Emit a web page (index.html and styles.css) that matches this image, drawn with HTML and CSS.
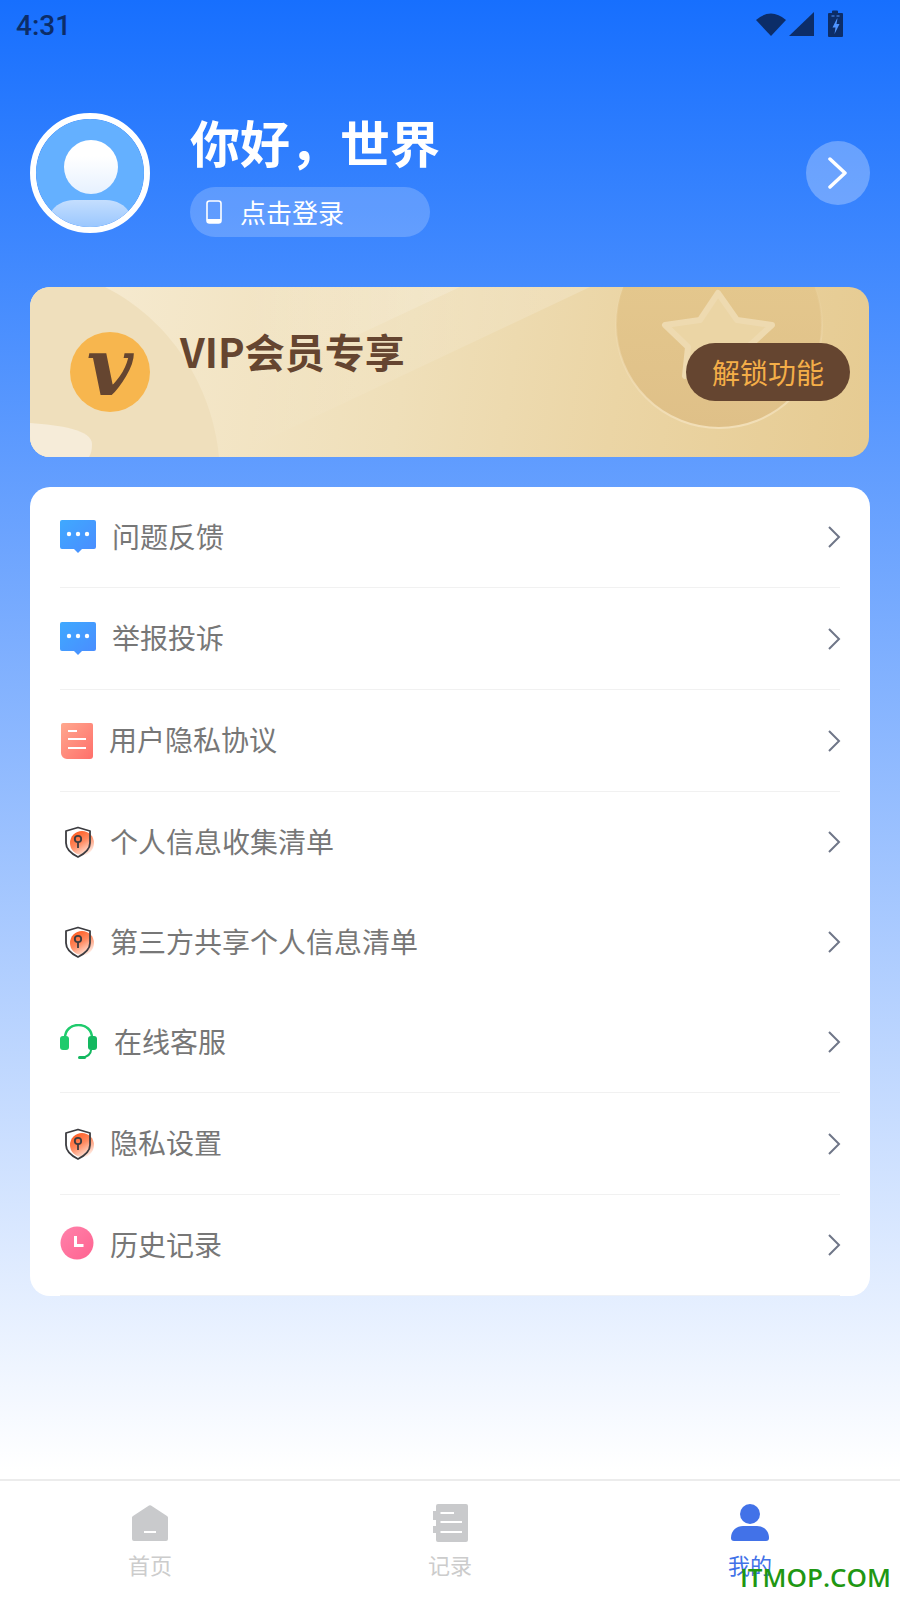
FILE: index.html
```html
<!DOCTYPE html>
<html lang="zh">
<head>
<meta charset="utf-8">
<title>我的</title>
<link rel="stylesheet" href="styles.css">
</head>
<body>
<div class="page">
  <main class="main">
    <div class="status">
      <span class="time">4:31</span>
      <svg class="status-icons" width="90" height="28" viewBox="0 0 90 28">
        <path d="M0 10Q15-3 30 10L15 26Z" fill="#0c2d68"/>
        <path d="M33 26L58 2V26Z" fill="#0c2d68"/>
        <path d="M76 1.5a1 1 0 0 1 1-1h4a1 1 0 0 1 1 1V3h4a1 1 0 0 1 1 1v22a1 1 0 0 1-1 1H73a1 1 0 0 1-1-1V4a1 1 0 0 1 1-1h3Z" fill="#0c2d68"/>
        <path d="M81 8.500l-4.500 9h3l-1 6.500 5-10h-3l1-5.500Z" fill="#4f94ff"/>
        <path d="M75.500 6h3M80.500 6h3" stroke="#4f94ff" stroke-width="1"/>
      </svg>
    </div>

    <header class="profile">
      <div class="avatar">
        <svg width="108" height="108" viewBox="0 0 108 108">
          <defs>
            <linearGradient id="headG" x1="0" y1="0" x2="0" y2="1"><stop offset="0.3" stop-color="#fff"/><stop offset="1" stop-color="#e6f1ff"/></linearGradient>
            <linearGradient id="bodyG" x1="0" y1="0" x2="0" y2="1"><stop offset="0" stop-color="#c4defe"/><stop offset="1" stop-color="#93c3fe"/></linearGradient>
          </defs>
          <circle cx="54" cy="54" r="54" fill="#64b0ff"/>
          <circle cx="55" cy="48" r="27" fill="url(#headG)"/>
          <path d="M14 95C18 86 28 81 38 81H70C80 81 90 86 94 95A54 54 0 0 1 14 95Z" fill="url(#bodyG)"/>
        </svg>
      </div>
      <div class="who">
        <h1 class="hello">你好，世界</h1>
        <div class="login">
          <svg class="login-icon" width="16" height="24" viewBox="0 0 16 24">
            <rect x="1" y="1" width="14" height="22" rx="2.500" fill="none" stroke="#fff" stroke-width="1.600"/>
            <path d="M1 19H15V20.500A2.500 2.500 0 0 1 12.500 23H3.500A2.500 2.500 0 0 1 1 20.500Z" fill="#fff"/>
          </svg>
          <span>点击登录</span>
        </div>
      </div>
      <div class="next">
        <svg width="20" height="32" viewBox="0 0 20 32"><path d="M2 2L17 16L2 30" fill="none" stroke="#fff" stroke-width="3.500" stroke-linecap="round" stroke-linejoin="round"/></svg>
      </div>
    </header>

    <section class="vip">
      <svg class="vip-bg" width="840" height="170" viewBox="30 287 840 170">
        <defs>
          <linearGradient id="vipG" gradientUnits="userSpaceOnUse" x1="30" y1="287" x2="870" y2="420">
            <stop offset="0" stop-color="#f7ecd4"/><stop offset="0.45" stop-color="#efdfb9"/><stop offset="0.7" stop-color="#ebd5a5"/><stop offset="1" stop-color="#e6cb92"/>
          </linearGradient>
          <linearGradient id="coinG" x1="0" y1="0" x2="0" y2="1"><stop offset="0" stop-color="#e6ca8f"/><stop offset="1" stop-color="#dfc088"/></linearGradient>
          <linearGradient id="coinS" x1="0" y1="0" x2="0" y2="1"><stop offset="0.3" stop-color="#f2dfb8" stop-opacity="0"/><stop offset="1" stop-color="#f2dfb8"/></linearGradient>
          <linearGradient id="bandB" gradientUnits="userSpaceOnUse" x1="240" y1="0" x2="590" y2="0"><stop offset="0" stop-color="#fff" stop-opacity="0"/><stop offset="1" stop-color="#fff" stop-opacity=".18"/></linearGradient>
          <linearGradient id="bandA" gradientUnits="userSpaceOnUse" x1="240" y1="0" x2="460" y2="0"><stop offset="0" stop-color="#fff" stop-opacity="0"/><stop offset="1" stop-color="#fff" stop-opacity=".18"/></linearGradient>
        </defs>
        <rect x="30" y="287" width="840" height="170" fill="url(#vipG)"/>
        <path d="M590 287L240 452V287Z" fill="url(#bandB)"/>
        <path d="M460 287L240 390V287Z" fill="url(#bandA)"/>
        <path d="M30 287H105C170 320 212 385 219 457H30Z" fill="#efdfbc"/>
        <path d="M30 423C60 425 92 430 92 444C92 450 91 454 89 457H30Z" fill="#f6ecd9"/>
        <circle cx="719" cy="325" r="103" fill="url(#coinG)" stroke="url(#coinS)" stroke-width="2"/>
        <path d="M718 293L737 320L772 325L748 347L752 376L718 360L685 376L688 347L665 325L700 320Z" fill="#ebd5a5" stroke="#eedab0" stroke-width="6" stroke-linejoin="round"/>
      </svg>
      <div class="vip-logo"><span class="vip-v">v</span></div>
      <h2 class="vip-title">VIP会员专享</h2>
      <div class="unlock">解锁功能</div>
    </section>

    <section class="menu">
      <div class="row row-first">
        <svg class="ico ico-msg" width="36" height="34" viewBox="0 0 36 34"><use href="#msg"/></svg>
        <span class="label">问题反馈</span>
        <svg class="chev" width="14" height="24" viewBox="0 0 14 24"><path d="M2 2L12 12L2 22" fill="none" stroke="#6f7688" stroke-width="2"/></svg>
      </div>
      <div class="row row-b">
        <svg class="ico ico-msg" width="36" height="34" viewBox="0 0 36 34"><use href="#msg"/></svg>
        <span class="label">举报投诉</span>
        <svg class="chev" width="14" height="24" viewBox="0 0 14 24"><path d="M2 2L12 12L2 22" fill="none" stroke="#6f7688" stroke-width="2"/></svg>
      </div>
      <div class="row row-b">
        <svg class="ico ico-doc" width="32" height="36" viewBox="0 0 32 36">
          <defs><linearGradient id="docG" x1="0" y1="0" x2="1" y2="1"><stop offset="0" stop-color="#ffa88e"/><stop offset="1" stop-color="#ff6f6b"/></linearGradient></defs>
          <path d="M2 0H30a2 2 0 0 1 2 2V33a3 3 0 0 1-3 3H6a6 6 0 0 1-6-6V2a2 2 0 0 1 2-2Z" fill="url(#docG)"/>
          <path d="M7 8H16M7 16H25M7 25H25" stroke="#fff" stroke-width="2"/>
        </svg>
        <span class="label">用户隐私协议</span>
        <svg class="chev" width="14" height="24" viewBox="0 0 14 24"><path d="M2 2L12 12L2 22" fill="none" stroke="#6f7688" stroke-width="2"/></svg>
      </div>
      <div class="row row-c">
        <svg class="ico ico-shield" width="30" height="32" viewBox="0 0 30 32"><use href="#shield"/></svg>
        <span class="label">个人信息收集清单</span>
        <svg class="chev" width="14" height="24" viewBox="0 0 14 24"><path d="M2 2L12 12L2 22" fill="none" stroke="#6f7688" stroke-width="2"/></svg>
      </div>
      <div class="row row-c">
        <svg class="ico ico-shield" width="30" height="32" viewBox="0 0 30 32"><use href="#shield"/></svg>
        <span class="label">第三方共享个人信息清单</span>
        <svg class="chev" width="14" height="24" viewBox="0 0 14 24"><path d="M2 2L12 12L2 22" fill="none" stroke="#6f7688" stroke-width="2"/></svg>
      </div>
      <div class="row row-first">
        <svg class="ico ico-head" width="38" height="36" viewBox="0 0 38 36">
          <path d="M5 14C5 6 11 1 18.500 1S32 6 32 14" fill="none" stroke="#1ecb6c" stroke-width="2.400"/>
          <path d="M31 26C31 31 27 33 21 34" fill="none" stroke="#14b860" stroke-width="2"/>
          <rect x="0" y="12" width="9" height="14" rx="3" fill="#1ecb6c"/>
          <rect x="28" y="12" width="9" height="14" rx="3" fill="#14b860"/>
          <rect x="18" y="32" width="8" height="3" rx="1.500" fill="#14b860"/>
        </svg>
        <span class="label">在线客服</span>
        <svg class="chev" width="14" height="24" viewBox="0 0 14 24"><path d="M2 2L12 12L2 22" fill="none" stroke="#6f7688" stroke-width="2"/></svg>
      </div>
      <div class="row row-b">
        <svg class="ico ico-shield" width="30" height="32" viewBox="0 0 30 32"><use href="#shield"/></svg>
        <span class="label">隐私设置</span>
        <svg class="chev" width="14" height="24" viewBox="0 0 14 24"><path d="M2 2L12 12L2 22" fill="none" stroke="#6f7688" stroke-width="2"/></svg>
      </div>
      <div class="row row-first row-last">
        <svg class="ico ico-clock" width="34" height="34" viewBox="0 0 34 34">
          <defs><linearGradient id="clockG" x1="0" y1="0" x2="1" y2="1"><stop offset="0" stop-color="#ff82ab"/><stop offset="1" stop-color="#ff6390"/></linearGradient></defs>
          <circle cx="17" cy="17" r="16.500" fill="url(#clockG)"/>
          <path d="M15.500 10V19.500H23.500" fill="none" stroke="#fff" stroke-width="3"/>
        </svg>
        <span class="label">历史记录</span>
        <svg class="chev" width="14" height="24" viewBox="0 0 14 24"><path d="M2 2L12 12L2 22" fill="none" stroke="#6f7688" stroke-width="2"/></svg>
      </div>
    </section>
  </main>

  <nav class="tabs">
    <div class="tab">
      <svg width="38" height="38" viewBox="0 0 38 38"><path d="M18 1.500a2 2 0 0 1 2 0L36 12a2 2 0 0 1 1 2V35a2 2 0 0 1-2 2H3a2 2 0 0 1-2-2V14a2 2 0 0 1 1-2Z" fill="#c9cacc"/><path d="M13 28H25" stroke="#fff" stroke-width="2"/></svg>
      <span class="tab-label">首页</span>
    </div>
    <div class="tab">
      <svg width="36" height="38" viewBox="0 0 36 38"><path d="M4 2a2 2 0 0 1 2-2H34a2 2 0 0 1 2 2V36a2 2 0 0 1-2 2H6a2 2 0 0 1-2-2V29H1V22H4V16H1V7H4Z" fill="#c9cacc"/><path d="M8.500 9H22M8.500 18H30M8.500 28H30" stroke="#fff" stroke-width="2"/></svg>
      <span class="tab-label">记录</span>
    </div>
    <div class="tab tab-on">
      <svg width="40" height="38" viewBox="0 0 40 38"><circle cx="20" cy="10" r="10" fill="#4272e8"/><path d="M1 34C1 26 7 22 13 22H27C33 22 39 26 39 34C39 36 38 37 36 37H4C2 37 1 36 1 34Z" fill="#4272e8"/></svg>
      <span class="tab-label">我的</span>
    </div>
    <span class="watermark">ITMOP.COM</span>
  </nav>
</div>

<svg class="defs" width="0" height="0">
  <defs>
    <linearGradient id="msgG" x1="0" y1="0" x2="1" y2="1"><stop offset="0" stop-color="#3fa9ff"/><stop offset="1" stop-color="#4a8cff"/></linearGradient>
    <linearGradient id="orG" x1="0" y1="0" x2="0.6" y2="1"><stop offset="0" stop-color="#ff4f10"/><stop offset="0.55" stop-color="#ff8a60"/><stop offset="1" stop-color="#ffe6dc"/></linearGradient>
    <g id="msg">
      <path d="M2 0H34a2 2 0 0 1 2 2V27a2 2 0 0 1-2 2H22L18 33L14 29H2a2 2 0 0 1-2-2V2a2 2 0 0 1 2-2Z" fill="url(#msgG)"/>
      <circle cx="9" cy="14" r="2.200" fill="#fff"/><circle cx="18" cy="14" r="2.200" fill="#fff"/><circle cx="27" cy="14" r="2.200" fill="#fff"/>
    </g>
    <g id="shield">
      <circle cx="17" cy="17" r="12" fill="url(#orG)"/>
      <path d="M13 1.500L25 5V17C25 24 19 28 13 31C7 28 1 24 1 17V5Z" fill="none" stroke="#3c3c40" stroke-width="1.800" stroke-linejoin="round"/>
      <circle cx="13" cy="13" r="3.200" fill="none" stroke="#3c3c40" stroke-width="1.800"/>
      <path d="M13 16V22" stroke="#3c3c40" stroke-width="1.800"/>
    </g>
  </defs>
</svg>
</body>
</html>
```

FILE: styles.css
```css
* { box-sizing: border-box; }
html, body { margin: 0; padding: 0; }
body { font-family: "Noto Sans CJK SC", "Noto Sans", sans-serif; }
.defs { position: absolute; }
.page {
  width: 900px;
  height: 1600px;
  display: flex;
  flex-direction: column;
  background: linear-gradient(#176ffe 0, #fff 1470px);
  overflow: hidden;
}
.main { flex: 1; }
.status {
  height: 50px;
  display: flex;
  align-items: center;
  padding-left: 16px;
}
.time {
  font-family: Roboto, sans-serif;
  font-size: 28px;
  font-weight: 500;
  color: #0c2d68;
}
.status-icons { margin-left: auto; margin-right: 54px; margin-top: -2px; }

.profile {
  margin-top: 63px;
  padding: 0 30px;
  height: 120px;
  display: flex;
  align-items: flex-start;
}
.avatar {
  width: 120px;
  height: 120px;
  border-radius: 50%;
  border: 6px solid #fff;
  overflow: hidden;
  flex: none;
}
.avatar svg { display: block; }
.who { margin-left: 40px; }
.hello {
  margin: -2px 0 0;
  font-size: 50px;
  line-height: 60px;
  font-weight: 700;
  color: #fff;
  white-space: nowrap;
}
.login {
  margin-top: 16px;
  width: 240px;
  height: 50px;
  border-radius: 25px;
  background: rgba(255, 255, 255, .2);
  display: flex;
  align-items: center;
  padding-left: 16px;
  color: #fff;
  font-size: 26px;
}
.login-icon { margin-right: 18px; flex: none; }
.login span { margin-bottom: 2px; }
.next {
  margin-left: auto;
  margin-top: 28px;
  width: 64px;
  height: 64px;
  border-radius: 50%;
  background: rgba(255, 255, 255, .28);
  display: flex;
  align-items: center;
  justify-content: center;
}

.vip {
  position: relative;
  margin: 54px 31px 0 30px;
  height: 170px;
  border-radius: 20px;
  overflow: hidden;
  display: flex;
  align-items: center;
}
.vip-bg { position: absolute; left: 0; top: 0; }
.vip-logo {
  position: relative;
  margin-left: 40px;
  width: 80px;
  height: 80px;
  border-radius: 50%;
  background: #f7b64e;
  display: flex;
  align-items: center;
  justify-content: center;
  flex: none;
}
.vip-v {
  font-family: "DejaVu Serif", serif;
  font-style: italic;
  font-weight: 700;
  font-size: 80px;
  line-height: 80px;
  color: #654530;
  margin-top: -11px;
}
.vip-title {
  position: relative;
  margin: 0 0 43px 30px;
  font-size: 40px;
  line-height: 56px;
  font-weight: 700;
  color: #654530;
  white-space: nowrap;
}
.unlock {
  position: relative;
  margin-left: auto;
  margin-right: 19px;
  width: 164px;
  height: 58px;
  border-radius: 29px;
  background: #654530;
  color: #f4ae48;
  font-size: 28px;
  display: flex;
  align-items: center;
  justify-content: center;
}

.menu {
  margin: 30px 30px 0;
  background: #fff;
  border-radius: 20px;
  overflow: hidden;
}
.row {
  margin: 0 30px;
  display: flex;
  align-items: center;
  font-size: 28px;
  color: #777;
  white-space: nowrap;
}
.row-first { height: 101px; border-bottom: 1px solid #f1f1f1; }
.row-b { height: 102px; border-bottom: 1px solid #f1f1f1; }
.row-c { height: 100px; }
.row-last { border-bottom: 1px solid #eef1f6; }
.label { margin-bottom: 3px; }
.ico { flex: none; }
.ico-msg { margin-right: 16px; }
.ico-doc { margin-left: 1px; margin-right: 16px; }
.ico-shield { margin-left: 5px; margin-right: 15px; }
.ico-head { margin-right: 16px; }
.ico-clock { margin-right: 16px; margin-bottom: 4px; }
.chev { margin-left: auto; margin-right: -1px; flex: none; }

.tabs {
  position: relative;
  height: 121px;
  flex: none;
  background: #fff;
  border-top: 2px solid #ececec;
  display: flex;
}
.tab {
  flex: 1;
  display: flex;
  flex-direction: column;
  align-items: center;
  padding-top: 23px;
  color: #ccc;
}
.tab-on { color: #4272e8; }
.tab svg { display: block; flex: none; }
.tab-label {
  margin-top: 6px;
  font-size: 22px;
  line-height: 32px;
}
.watermark {
  position: absolute;
  right: 9px;
  bottom: 6px;
  font-family: "Open Sans", sans-serif;
  font-size: 26px;
  line-height: 34px;
  font-weight: 600;
  color: #1f9713;
}
```
